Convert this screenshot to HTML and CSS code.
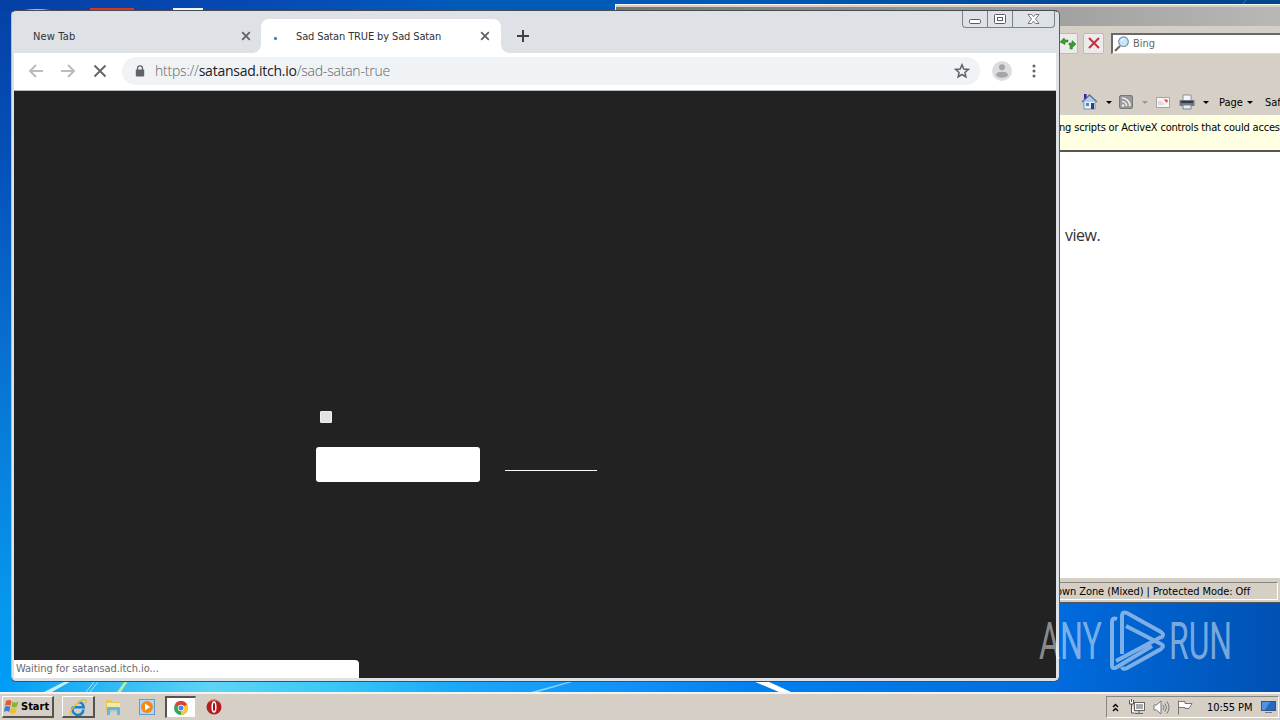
FILE: index.html
```html
<!DOCTYPE html>
<html lang="en">
<head>
<meta charset="utf-8">
<title>Desktop</title>
<link rel="stylesheet" href="styles.css">
</head>
<body>
<div class="desktop">
  <div class="wallpaper">
    <svg class="streaks" width="1280" height="692" viewBox="0 0 1280 692">
      <defs>
        <linearGradient id="floor"><stop offset="0" stop-color="#009df5"/><stop offset=".08" stop-color="#22b3f5"/><stop offset=".2" stop-color="#5fd4f5"/><stop offset=".32" stop-color="#35c8f6"/><stop offset=".43" stop-color="#1aa8f8"/><stop offset=".6" stop-color="#0f90fa"/><stop offset=".72" stop-color="#0080f0"/><stop offset="1" stop-color="#006cdf"/></linearGradient>
        <linearGradient id="glow" x1="0" y1="0" x2="1" y2="0"><stop offset="0" stop-color="#006cdf"/><stop offset="1" stop-color="#0051b3"/></linearGradient>
      </defs>
      <rect x="1056" y="600" width="224" height="92" fill="url(#glow)"/>
      <rect y="680" width="1060" height="12" fill="url(#floor)"/>
      <path d="M44 692L68 680h5L52 692z" fill="#c8effc"/>
      <path d="M86 692l8-10M90 692l8-10" stroke="#a5e5f8"/>
      <path d="M117 692l8-11h3l-7 11z" fill="#b7eba0"/>
      <path d="M531 692l37-10h4l-34 10z" fill="#8bd5fc"/>
      <path d="M753 681h14l24 11h-12z" fill="#fff"/>
      <path d="M1238 10l8-10" stroke="#3272bd"/>
      <path d="M24 10q13-2 26 0z" fill="#a8c4d8"/>
      <rect x="90" y="8" width="44" height="3" fill="#d93524"/>
      <rect x="173" y="8" width="30" height="3" fill="#f2f5f5"/>
    </svg>
  </div>

  <section class="ie">
    <div class="ie-title"></div>
    <div class="ie-nav">
      <span class="ie-btn"><svg width="16" height="16" viewBox="0 0 16 16"><path d="M0 7l4-4 1 2h3v2H5v2.500zM16 9l-4-3.500V8H9v2h1v4h2.500l-.5-1z" fill="#35a02c" stroke="#1b7a1b" stroke-width=".5"/></svg></span>
      <span class="ie-btn"><svg width="16" height="16" viewBox="0 0 16 16"><path d="M3 3l10 10M13 3L3 13" stroke="#c4303e" stroke-width="2"/></svg></span>
      <div class="search">
        <svg width="16" height="16" viewBox="0 0 16 16"><path d="M6 10l-5 5" stroke="#71685f" stroke-width="2.2"/><circle cx="9.5" cy="5.7" r="4.8" fill="#c9e5f8" stroke="#7590ab" stroke-width="1.2"/><path d="M7 5q1-2 3-2" stroke="#fff" fill="none"/></svg>
        <span class="bing">Bing</span>
      </div>
    </div>
    <div class="ie-cmd">
      <svg class="home" width="17" height="17" viewBox="0 0 17 17"><path d="M3 8h11v8H3z" fill="#e8f2fa" stroke="#7a90ad"/><path d="M1 9l7.5-7L16 9" fill="#b7cbe4" stroke="#5474a4" stroke-width="1.4"/><path d="M3 1h2.5v4L3 6z" fill="#3a22a8"/><path d="M5 10h3v3H5z" fill="#4b84c0"/><path d="M10 10h3v6h-3z" fill="#1d4684"/></svg>
      <i class="caret"></i>
      <svg class="rss" width="14" height="14" viewBox="0 0 14 14"><rect x=".5" y=".5" width="13" height="13" rx="1.5" fill="#999" stroke="#777"/><circle cx="4" cy="10.5" r="1.3" fill="#eee"/><path d="M3 6.5a4.5 4.5 0 014.5 4.5M3 3a8 8 0 018 8" fill="none" stroke="#eee" stroke-width="1.6"/></svg>
      <i class="caret dim"></i>
      <svg class="mail" width="14" height="11" viewBox="0 0 14 11"><rect x=".5" y=".5" width="13" height="10" fill="#f6f3f1" stroke="#aaa4a4"/><path d="M8 2l4 1-1 3-2-2z" fill="#d2515d"/><path d="M2 5h4M2 7h6" stroke="#c5c2d0"/></svg>
      <svg class="print" width="16" height="16" viewBox="0 0 16 16"><path d="M4 1h8v6H4z" fill="#f3f6f9" stroke="#8893a0"/><rect x=".5" y="6" width="15" height="6" rx="1" fill="#6c7680"/><path d="M2 7h12v2H2z" fill="#343d47"/><path d="M4 11h8v4H4z" fill="#e2f0f4" stroke="#7b8590"/></svg>
      <i class="caret"></i>
      <span class="page-lbl">Page</span>
      <i class="caret"></i>
      <span class="safe-lbl">Saf</span>
    </div>
    <div class="infobar"><span>ng scripts or ActiveX controls that could acces</span></div>
    <div class="ie-page"><span>view.</span></div>
    <div class="ie-status"><span class="ie-status-text">own Zone (Mixed) | Protected Mode: Off</span></div>
  </section>

  <section class="chrome">
    <div class="tabs">
      <div class="tab idle"><span class="t-new">New Tab</span><svg class="x" width="10" height="10" viewBox="0 0 10 10"><path d="M1.2 1.2l7.6 7.6M8.8 1.2L1.2 8.8"/></svg></div>
      <div class="tab active"><i class="spin"></i><span class="t-sad">Sad Satan TRUE by Sad Satan</span><svg class="x" width="10" height="10" viewBox="0 0 10 10"><path d="M1.2 1.2l7.6 7.6M8.8 1.2L1.2 8.8"/></svg></div>
      <svg class="plus" width="12" height="12" viewBox="0 0 12 12"><path d="M6 0v12M0 6h12" stroke="#3c4043" stroke-width="2"/></svg>
      <div class="winbtns">
        <span><svg width="24" height="16" viewBox="0 0 24 16"><rect x="6.5" y="8.5" width="11" height="4" rx="1.2" fill="#fff" stroke="#555b68"/></svg></span>
        <span><svg width="24" height="16" viewBox="0 0 24 16"><rect x="6.500" y="3.500" width="11" height="9" rx="1" fill="#fff" stroke="#555b68"/><rect x="9.500" y="6.500" width="5" height="3" fill="#fff" stroke="#555b68"/></svg></span>
        <span><svg width="41" height="16" viewBox="0 0 41 16"><path d="M15 3.500h3.500l2 2.200 2-2.200H26L22.500 8l3.500 4.500h-3.500l-2-2.400-2 2.400H15L18.500 8z" fill="#fff" stroke="#666b77" stroke-width=".9"/></svg></span>
      </div>
    </div>
    <div class="toolbar">
      <svg class="nav" width="16" height="16" viewBox="0 0 16 16"><path d="M15 8H2M8 2L2 8l6 6" stroke="#babcbe"/></svg>
      <svg class="nav" width="16" height="16" viewBox="0 0 16 16"><path d="M1 8h13M8 2l6 6-6 6" stroke="#babcbe"/></svg>
      <svg class="nav" width="16" height="16" viewBox="0 0 16 16"><path d="M2.500 2.500l11 11M13.500 2.500l-11 11" stroke="#5f6368"/></svg>
      <div class="omni">
        <svg width="10" height="12" viewBox="0 0 10 12"><path d="M2.500 5V3.300a2.500 2.500 0 015 0V5" fill="none" stroke="#5f6368" stroke-width="1.300"/><rect x=".8" y="4.500" width="8.400" height="7" rx="1" fill="#5f6368"/></svg>
        <span class="url">https://<b>satansad.itch.io</b>/sad-satan-true</span>
        <svg class="star" width="16" height="16" viewBox="0 0 16 16"><path d="M8 1.800l1.800 4.200 4.500.4-3.400 3 1 4.500L8 11.500l-3.900 2.400 1-4.500-3.400-3 4.500-.4z" fill="none" stroke="#5f6368" stroke-width="1.500"/></svg>
      </div>
      <svg class="avatar" width="20" height="20" viewBox="0 0 20 20"><circle cx="10" cy="10" r="10" fill="#dddddf"/><circle cx="10" cy="6.300" r="3" fill="#a5a6a8"/><ellipse cx="10" cy="13.700" rx="6" ry="3" fill="#a5a6a8"/></svg>
      <svg class="dots" width="4" height="14" viewBox="0 0 4 14"><circle cx="2" cy="2" r="1.500"/><circle cx="2" cy="7" r="1.500"/><circle cx="2" cy="12" r="1.500"/></svg>
    </div>
    <div class="view">
      <div class="check"></div>
      <div class="row"><div class="button"></div><div class="line"></div></div>
      <div class="waiting"><span>Waiting for satansad.itch.io...</span></div>
    </div>
  </section>

  <svg class="brand" width="200" height="68" viewBox="0 0 200 68">
    <g fill="#fff" fill-opacity=".49">
      <text x="3" y="52" textLength="63" lengthAdjust="spacingAndGlyphs">ANY</text>
      <text x="133" y="52" textLength="63" lengthAdjust="spacingAndGlyphs">RUN</text>
    </g>
    <path d="M81 12q-5-2-5 3v43q0 5 5 2l35-21M86 47V9q0-5 5-3l34 19q4 3 0 6M90 19l35 18q4 2 0 5L91 61q-4 2-5-1M80 54l45-24" fill="none" stroke="#fff" stroke-opacity=".49" stroke-width="4"/>
  </svg>

  <footer class="taskbar">
    <div class="start"><svg width="15" height="15" viewBox="0 0 15 15"><path d="M2 2q3-2 5.500 0L6.500 7Q4 5 1 7z" fill="#e9582d"/><path d="M8.500 2.500q3 2 6 0l-1.500 5q-3 2-5.500 0z" fill="#80b83c"/><path d="M.8 8q3-2 5.500 0l-1 5Q3 11 0 13z" fill="#3f7fcf"/><path d="M7 8.500q3 2 6 0l-1.500 5q-3 2-5.500 0z" fill="#f2bd29"/></svg><span>Start</span></div>
    <div class="task raised"><svg width="18" height="18" viewBox="0 0 18 18"><path d="M14.300 11.500A5.400 5.400 0 114.300 8.800M4.500 9.300h10.200A5.400 5.400 0 009.500 4.300" fill="none" stroke="#1684d2" stroke-width="2.600"/><path d="M3 16.500q-4-2 3-9T16.500 2q1.500 1-.5 4" fill="none" stroke="#e9bd32" stroke-width="1.300"/></svg></div>
    <div class="task"><svg width="16" height="16" viewBox="0 0 16 16"><path d="M1 1h5l1 2h8v10H1z" fill="#e5c75c"/><path d="M2 4h13v8H2z" fill="#f6e9a2"/><path d="M2 16V9q0-1 1-1h11q1 0 1 1v7h-3v-4.500H5V16z" fill="#66b5dc"/></svg></div>
    <div class="task"><svg width="16" height="16" viewBox="0 0 16 16"><rect x=".5" y=".5" width="15" height="15" fill="#b4d7ef" stroke="#5d9ed2"/><circle cx="8" cy="8" r="6" fill="#f08a1c"/><path d="M6 4.500l5 3.500-5 3.500z" fill="#fff"/></svg></div>
    <div class="task sunken"><svg width="14" height="14" viewBox="0 0 14 14"><circle cx="7" cy="7" r="7" fill="#39a552"/><path d="M7 7L.9 3.500A7 7 0 0113.100 3.500z" fill="#df4232"/><path d="M7 7l6.100-3.500A7 7 0 017 14z" fill="#fbc935"/><circle cx="7" cy="7" r="3.200" fill="#fff"/><circle cx="7" cy="7" r="2.500" fill="#4688ee"/></svg></div>
    <div class="task"><svg width="16" height="16" viewBox="0 0 16 16"><circle cx="8" cy="8" r="7.500" fill="#b51c20"/><path d="M3 3q5-4 10 0" stroke="#df7772" fill="none"/><ellipse cx="8" cy="8" rx="1.800" ry="5" fill="#9b1014" stroke="#fff" stroke-width="1.500"/></svg></div>
    <div class="tray">
      <svg width="7" height="9" viewBox="0 0 7 9"><path d="M1 4l2.500-2.500L6 4M1 8l2.500-2.500L6 8" fill="none" stroke="#000" stroke-width="1.400"/></svg>
      <svg class="net" width="16" height="16" viewBox="0 0 16 16"><rect x="5.500" y="3.500" width="10" height="8" fill="#aaa" stroke="#666"/><rect x="6.500" y="4.500" width="8" height="6" fill="none" stroke="#fff"/><path d="M6 14.500h8M10 12v2" stroke="#666"/><path d="M.5 1v4h4V1M2.500 0v3M2.500 5v9h3" fill="#fff" stroke="#555"/></svg>
      <svg class="vol" width="17" height="15" viewBox="0 0 17 15"><path d="M1 5h2.500L8 1v13l-4.500-4H1z" fill="#fff" stroke="#777"/><path d="M10 5q2 2.500 0 5M12 3.500q3 4 0 8M14 1.500q4 6 0 12" fill="none" stroke="#777"/></svg>
      <svg class="flag" width="16" height="15" viewBox="0 0 16 15"><path d="M1.500.5v14M2 1.500h6v2h7l-3 5H8v-1H2" fill="#fff" stroke="#777"/></svg>
      <span class="clock">10:55 PM</span>
      <svg class="show" width="15" height="12" viewBox="0 0 15 12"><rect x=".5" y=".5" width="14" height="9" fill="#2867c4" stroke="#355581"/><path d="M1 1h8L4 9H1z" fill="#4f94e3"/><path d="M4 11.500h7" stroke="#6d7783"/></svg>
    </div>
  </footer>
</div>
</body>
</html>
```
FILE: styles.css
```css
* { box-sizing: border-box; }
body { margin: 0; overflow: hidden; font: 11px "DejaVu Sans Condensed", "DejaVu Sans", sans-serif; font-stretch: condensed; }
svg { display: block; flex: none; }
span { white-space: nowrap; }
.desktop { position: relative; width: 1280px; height: 720px; overflow: hidden; display: flex; flex-direction: column; justify-content: flex-end; }
.wallpaper { position: absolute; inset: 0; background: linear-gradient(180deg, #0641a6 0, #044fb7 150px, #0870d0 350px, #0796ed 600px, #009df5 690px); }
.wallpaper::before { content: ""; position: absolute; left: 0; top: 0; width: 100%; height: 12px; background: linear-gradient(90deg, #0440a5, #0749b3 20%, #005bb9 36%, #0059b5 60%, #004895 85%, #00468c); }
.streaks { position: absolute; left: 0; top: 0; }

.ie { position: absolute; left: 615px; top: 4px; width: 670px; height: 599px; border: 1px solid #f5f4f1; border-bottom-color: #4b5662; background: #d5cfc6; display: flex; flex-direction: column; padding-top: 2px; }
.ie-title { height: 19px; background: linear-gradient(90deg, #77746d, #a0a0a0 65%, #b9b8b6); }
.ie-nav { height: 39px; display: flex; align-items: center; padding-left: 441px; padding-bottom: 5px; gap: 5px; }
.ie-btn { width: 21px; height: 21px; background: #eceaea; border: 1px solid #bebbb7; border-radius: 2px; display: flex; align-items: center; justify-content: center; }
.search { flex: 1; margin-left: 2px; height: 21px; background: #fff; border: 1px solid #68686d; border-width: 2px 0 1px 2px; border-bottom-color: #ddd; display: flex; align-items: center; padding-left: 1px; gap: 3px; color: #666; }
.ie-cmd { height: 50px; display: flex; align-items: center; padding: 24px 0 0 465px; }
.ie-cmd .home { margin: -2px 8px 0 0; }
.caret { border: 3px solid transparent; border-top-color: #000; border-bottom: 0; width: 6px; height: 3px; flex: none; }
.caret.dim { border-top-color: #999; }
.rss { margin: 0 9px 0 7px; }
.mail { margin: 0 9px 0 8px; }
.print { margin-right: 8px; }
.page-lbl { margin: 0 4px 0 10px; }
.safe-lbl { margin-left: 12px; }
.infobar { height: 37px; background: #ffffe1; border-bottom: 2px solid #57564f; padding: 6px 0 0 443px; }
.infobar span { display: block; line-height: 13px; letter-spacing: -.18px; }
.ie-page { flex: 1; background: #fff; padding: 72px 0 0 449px; font: 400 16px/22px "Open Sans", "Noto Sans", sans-serif; letter-spacing: -.5px; color: #333; }
.ie-status { height: 25px; padding: 4px 6px 3px 0; border-top: 1px solid #fff; }
.ie-status-text { display: block; height: 18px; border: 1px solid #88857e; border-right-color: #fff; border-bottom-color: #fff; padding-left: 439px; line-height: 17px; letter-spacing: -.08px; }

.chrome { position: absolute; left: 11px; top: 10px; width: 1048px; height: 671px; background: #dee1e6; border: 1px solid #464b54; border-color: #464b54 #dee1e6 #dee1e6 #b5bdc9; border-radius: 5px; box-shadow: 0 1px #38516a, 1px 0 #5a5d63; padding: 0 2px 2px; display: flex; flex-direction: column; }
.tabs { height: 42px; display: flex; align-items: flex-end; }
.tab { height: 34px; display: flex; align-items: center; color: #303336; flex: none; }
.t-sad { letter-spacing: -.13px; }
.tab .x { margin-left: auto; stroke: #5f6368; stroke-width: 1.800; }
.idle { width: 247px; padding: 0 10px 0 19px; }
.t-new { letter-spacing: .15px; }
.active { position: relative; width: 240px; background: #fff; border-radius: 8px 8px 0 0; padding: 0 11px 0 12px; }
.active::before, .active::after { content: ""; position: absolute; bottom: 0; width: 8px; height: 8px; }
.active::before { left: -8px; background: radial-gradient(circle at 0 0, transparent 7.5px, #fff 8px); }
.active::after { right: -8px; background: radial-gradient(circle at 100% 0, transparent 7.5px, #fff 8px); }
.spin { width: 3px; height: 3px; margin: 5px 19px 0 1px; background: #4285c8; border-radius: 1px; }
.plus { margin: 0 0 11px 16px; }
.winbtns { align-self: flex-start; margin-left: auto; margin-right: 1px; display: flex; border: 1px solid #7c828d; border-top: 0; border-radius: 0 0 4px 4px; }
.winbtns span + span { border-left: 1px solid #7c828d; }
.toolbar { height: 38px; background: #fff; border-bottom: 1px solid #b7b9bb; display: flex; align-items: center; padding: 0 20px 1px 14px; }
.nav { margin-right: 16px; fill: none; stroke-width: 2; }
.nav + .nav + .nav { stroke-width: 1.800; }
.omni { width: 858px; height: 28px; margin-left: -2px; border-radius: 14px; background: #f0f3f5; display: flex; align-items: center; padding: 0 10px 0 13px; }
.url { margin-left: 10px; font: 300 14px/20px "Open Sans", "Noto Sans", sans-serif; letter-spacing: -.21px; color: #5f656a; }
.url b { font-weight: 400; color: #202124; letter-spacing: -.25px; }
.star { margin-left: auto; }
.avatar { margin-left: 12px; }
.dots { margin-left: auto; fill: #5f6368; }
.view { flex: 1; background: #222; display: flex; flex-direction: column; align-items: flex-start; padding-top: 320px; }
.check { width: 12px; height: 12px; margin-left: 306px; background: #e3e3e3; border: 1px solid #f0f0f0; border-radius: 1px; }
.row { display: flex; margin: 24px 0 0 302px; gap: 25px; }
.button { width: 164px; height: 35px; background: #fff; border-radius: 3px; }
.line { width: 92px; height: 1px; margin-top: 23px; background: #fff; }
.waiting { margin-top: auto; width: 345px; height: 18px; background: #fff; border-top-right-radius: 4px; padding-left: 2px; line-height: 18px; letter-spacing: -.06px; color: #686b70; }

.brand { position: absolute; left: 1036px; top: 607px; }
.brand text { font: 400 52px Roboto, sans-serif; }

.taskbar { position: relative; height: 28px; border-top: 2px solid #f5f3ef; background: #d5cfc6; display: flex; align-items: center; padding: 0 1px 0 2px; }
.start, .raised { border: 1px solid #fff; border-right: 2px solid #55534f; border-bottom: 2px solid #55534f; }
.start { width: 52px; height: 22px; margin-right: 8px; display: flex; align-items: center; padding-left: 1px; gap: 2px; font-weight: bold; }
.task { width: 34px; height: 22px; display: flex; align-items: center; justify-content: center; }
.raised { width: 33px; margin-right: 1px; }
.sunken { width: 31px; margin: 0 1px; background: #fff; border: 1px solid #d5cfc6; border-top: 2px solid #55534f; border-left: 2px solid #55534f; }
.tray { margin-left: auto; width: 173px; height: 22px; border: 1px solid #88857e; border-right-color: #fff; border-bottom-color: #fff; display: flex; align-items: center; padding: 0 2px 0 5px; }
.net { margin-left: 10px; }
.vol { margin-left: 8px; }
.flag { margin-left: 7px; }
.clock { margin-left: 14px; letter-spacing: -.1px; }
.show { margin-left: auto; }
```
